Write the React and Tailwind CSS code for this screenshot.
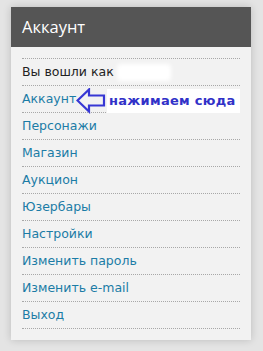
import React from "react";

const links = [
  "Персонажи",
  "Магазин",
  "Аукцион",
  "Юзербары",
  "Настройки",
  "Изменить пароль",
  "Изменить e-mail",
  "Выход",
];

function Arrow() {
  return (
    <svg width="30" height="26" viewBox="0 0 30 26" className="shrink-0">
      <path
        d="M1.5 12.5 L13 1.5 L13 7.5 L28 7.5 L28 17.5 L13 17.5 L13 23.5 Z"
        fill="none"
        stroke="#3737d4"
        strokeWidth="2.2"
        strokeLinejoin="miter"
      />
    </svg>
  );
}

export default function App() {
  return (
    <div className="w-[263px] h-[351px] bg-[#e4e4e4] pt-[7px] pl-[11px] overflow-hidden">
      <div className="w-[240px] shadow-[0_0_8px_rgba(0,0,0,0.18)]">
        {/* Header */}
        <div className="h-[40px] bg-[#555555] px-[11px] flex items-center">
          <span className="text-white text-[16.5px] font-['Open_Sans',sans-serif]">Аккаунт</span>
        </div>

        {/* Body */}
        <div className="bg-[#f2f2f2] px-[11px] py-[11px] font-['DejaVu_Sans',Verdana,sans-serif] text-[12.5px]">
          <ul className="border-t border-dotted border-[#a8a8a8]">
            <li className="h-[27px] border-b border-dotted border-[#a8a8a8] flex items-center text-[#222]">
              Вы вошли как
              <span className="ml-[3px] w-[54px] h-[17px] bg-white blur-[2px] rounded-sm" />
            </li>
            <li className="relative h-[27px] border-b border-dotted border-[#a8a8a8] flex items-center">
              <span className="text-[#1b7ca6]">Аккаунт</span>
              <div className="absolute left-[54px] top-[2px] flex items-center">
                <Arrow />
                <span className="ml-[1px] h-[24px] w-[133px] bg-white flex items-center pl-[2px] text-[#3131c8] font-bold text-[13px] tracking-[0.3px] font-['DejaVu_Sans',sans-serif]">
                  нажимаем сюда
                </span>
              </div>
            </li>
            {links.map((l) => (
              <li key={l} className="h-[27px] border-b border-dotted border-[#a8a8a8] flex items-center">
                <a className="text-[#1b7ca6]">{l}</a>
              </li>
            ))}
          </ul>
        </div>
      </div>
    </div>
  );
}
